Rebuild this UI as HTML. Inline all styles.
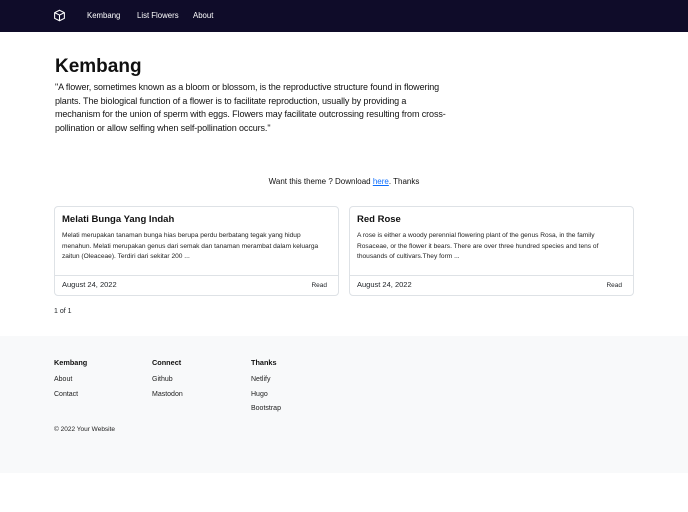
<!DOCTYPE html>
<html><head><meta charset="utf-8"><style>
*{box-sizing:border-box;margin:0;padding:0}
body{width:688px;height:512px;background:#fff;font-family:"Liberation Sans",sans-serif;color:#212529;position:relative;overflow:hidden}
.nav{position:absolute;left:0;top:0;width:688px;height:32px;background:#0f0c29}
.nav span{position:absolute;top:11px;color:#fff;font-size:7.8px}
.abs{position:absolute}
h1{position:absolute;left:55px;top:56px;font-size:19px;font-weight:bold;color:#111}
.lead{position:absolute;left:55px;top:81px;white-space:nowrap;font-size:9px;line-height:13.5px;color:#111;letter-spacing:-0.1px}
.card{position:absolute;top:206px;width:285px;height:90px;border:1px solid #dee2e6;border-radius:4px}
.card h3{position:absolute;left:7px;top:7px;font-size:9.5px;font-weight:bold;color:#111}
.card p{position:absolute;left:7px;top:24px;white-space:nowrap;font-size:6.6px;line-height:10.5px;color:#222}
.card .ft{position:absolute;left:0;top:68px;width:100%;height:21px;border-top:1px solid #dee2e6}
.card .d{position:absolute;left:7px;top:4px;font-size:7.5px}
.card .r{position:absolute;right:11px;top:6px;font-size:6.5px}
.foot{position:absolute;left:0;top:336px;width:688px;height:137px;background:#f8f9fa}
.foot div{position:absolute;font-size:7px;color:#222}
.foot b{font-size:7.3px;color:#111}
</style></head><body>
<div class="nav">
<svg class="abs" style="left:53px;top:9px" width="13" height="13" viewBox="0 0 16 16" fill="none" stroke="#fff" stroke-width="1.3"><path d="M8 1.5 14 4.5v7L8 14.5 2 11.5v-7z M2 4.5 8 7.5 14 4.5 M8 7.5v7"/></svg>
<span style="left:87px">Kembang</span><span style="left:137px">List Flowers</span><span style="left:193px">About</span>
</div>
<h1>Kembang</h1>
<div class="lead">"A flower, sometimes known as a bloom or blossom, is the reproductive structure found in flowering<br>plants. The biological function of a flower is to facilitate reproduction, usually by providing a<br>mechanism for the union of sperm with eggs. Flowers may facilitate outcrossing resulting from cross-<br>pollination or allow selfing when self-pollination occurs."</div>
<div class="abs" style="left:0;width:688px;top:177px;text-align:center;font-size:8px;color:#111">Want this theme ? Download <span style="color:#0d6efd;text-decoration:underline">here</span>. Thanks</div>
<div class="card" style="left:54px"><h3>Melati Bunga Yang Indah</h3><p>Melati merupakan tanaman bunga hias berupa perdu berbatang tegak yang hidup<br>menahun. Melati merupakan genus dari semak dan tanaman merambat dalam keluarga<br>zaitun (Oleaceae). Terdiri dari sekitar 200 ...</p><div class="ft"><span class="d">August 24, 2022</span><span class="r">Read</span></div></div>
<div class="card" style="left:349px"><h3>Red Rose</h3><p>A rose is either a woody perennial flowering plant of the genus Rosa, in the family<br>Rosaceae, or the flower it bears. There are over three hundred species and tens of<br>thousands of cultivars.They form ...</p><div class="ft"><span class="d">August 24, 2022</span><span class="r">Read</span></div></div>
<div class="abs" style="left:54px;top:308px;font-size:7px">1 of 1</div>
<div class="foot">
<div style="left:54px;top:22px"><b>Kembang</b></div>
<div style="left:54px;top:40px">About</div><div style="left:54px;top:55px">Contact</div>
<div style="left:152px;top:22px"><b>Connect</b></div>
<div style="left:152px;top:40px">Github</div><div style="left:152px;top:55px">Mastodon</div>
<div style="left:251px;top:22px"><b>Thanks</b></div>
<div style="left:251px;top:40px">Netlify</div><div style="left:251px;top:55px">Hugo</div><div style="left:251px;top:69px">Bootstrap</div>
<div style="left:54px;top:90px;font-size:6.5px">© 2022 Your Website</div>
</div>
</body></html>
